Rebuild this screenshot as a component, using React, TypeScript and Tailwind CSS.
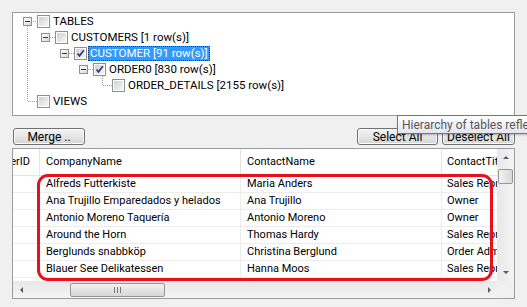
import type { ReactNode } from 'react';

const font = { fontFamily: 'Roboto, "Noto Sans", sans-serif' };

const rows = [
	['Alfreds Futterkiste', 'Maria Anders', 'Sales Representative'],
	['Ana Trujillo Emparedados y helados', 'Ana Trujillo', 'Owner'],
	['Antonio Moreno Taquería', 'Antonio Moreno', 'Owner'],
	['Around the Horn', 'Thomas Hardy', 'Sales Representative'],
	['Berglunds snabbköp', 'Christina Berglund', 'Order Administrator'],
	['Blauer See Delikatessen', 'Hanna Moos', 'Sales Representative'],
];

function ExpandBox() {
	return (
		<span className="relative w-[9px] h-[9px] border border-[#919191] bg-linear-to-br from-white to-[#d8d8d8] flex items-center justify-center shrink-0">
			<span className="w-[5px] h-px bg-[#1e395b]" />
		</span>
	);
}

function CheckBox({ checked }: { checked?: boolean }) {
	return (
		<span className="w-[13px] h-[13px] border border-[#8e8f8f] p-px bg-white shrink-0">
			<span className="block w-full h-full bg-linear-to-br from-[#cfd1d4] to-[#f7f7f7]">
				{checked && (
					<svg width="9" height="9" viewBox="0 0 9 9">
						<path d="M1.5 4.5 L3.5 6.8 L7.8 1.3" stroke="#2a3f73" strokeWidth="1.7" fill="none" />
					</svg>
				)}
			</span>
		</span>
	);
}

function TreeRow({
	pad,
	expand,
	checked,
	selected,
	children,
}: {
	pad: string;
	expand?: boolean;
	checked?: boolean;
	selected?: boolean;
	children: ReactNode;
}) {
	return (
		<div className={`h-[16px] flex items-center ${pad}`}>
			{expand ? <ExpandBox /> : <span className="w-[9px] shrink-0" />}
			<span className="w-[5px] shrink-0" />
			<CheckBox checked={checked} />
			<span
				className={
					selected
						? 'ml-px px-px h-[15px] leading-[13px] bg-[#3399ff] text-white border border-dotted border-[#1d3b66] whitespace-nowrap'
						: 'ml-px px-[2px] leading-[15px] whitespace-nowrap'
				}
			>
				{children}
			</span>
		</div>
	);
}

function Button({ w, children }: { w: string; children: ReactNode }) {
	return (
		<div
			className={`${w} h-[17px] border border-[#707070] rounded-[3px] bg-linear-to-b from-[#f3f3f3] via-[#e6e6e6] to-[#d4d4d4] flex items-center justify-center text-[12px] leading-none text-black shadow-[inset_0_0_0_1px_#fcfcfc]`}
		>
			{children}
		</div>
	);
}

function Arrow({ dir }: { dir: 'up' | 'down' | 'left' | 'right' }) {
	const d = {
		up: 'M1 5 L4 2 L7 5 Z',
		down: 'M1 2 L4 5 L7 2 Z',
		left: 'M5 1 L2 4 L5 7 Z',
		right: 'M3 1 L6 4 L3 7 Z',
	}[dir];
	return (
		<svg width="8" height="8" viewBox="0 0 8 8">
			<path d={d} fill="#5a5a5a" />
		</svg>
	);
}

export default function App() {
	return (
		<div
			className="relative w-[527px] h-[307px] bg-[#f0f0f0] overflow-hidden text-[12px] text-black pt-[12px]"
			style={font}
		>
			{/* tree */}
			<div className="relative mx-[12px] h-[104px] border border-[#9c9c9c] bg-white text-[11.5px]">
				<svg className="absolute inset-0" width="503" height="102">
					<g stroke="#a0a0a0" strokeDasharray="1 1" fill="none">
						<path d="M14.5 13 V88.5 H24" />
						<path d="M18 8.5 H24" />
						<path d="M37 24.5 H42" />
						<path d="M56 40.5 H61" />
						<path d="M75 56.5 H80" />
						<path d="M89.5 61 V72.5 H99" />
					</g>
				</svg>
				<div className="relative">
					<TreeRow pad="pl-[10px]" expand>
						TABLES
					</TreeRow>
					<TreeRow pad="pl-[28px]" expand>
						CUSTOMERS [1 row(s)]
					</TreeRow>
					<TreeRow pad="pl-[47px]" expand checked selected>
						CUSTOMER [91 row(s)]
					</TreeRow>
					<TreeRow pad="pl-[66px]" expand checked>
						ORDER0 [830 row(s)]
					</TreeRow>
					<TreeRow pad="pl-[85px]">ORDER_DETAILS [2155 row(s)]</TreeRow>
					<TreeRow pad="pl-[10px]">VIEWS</TreeRow>
				</div>
			</div>

			{/* buttons */}
			<div className="mt-[12px] px-[12px] flex items-center">
				<div className="ml-px">
					<Button w="w-[72px]">Merge ..</Button>
				</div>
				<div className="flex-1" />
				<Button w="w-[81px]">Select All</Button>
				<div className="w-[4px]" />
				<Button w="w-[73px]">Deselect All</Button>
			</div>

			{/* grid */}
			<div className="mx-[12px] mt-[3px] h-[151px] border border-[#9c9c9c] bg-white flex flex-col text-[11px]">
				<div className="h-[132px] flex">
					<div className="flex-1 flex flex-col overflow-hidden">
						<div className="h-[27px] flex border-b border-[#e3e3e3] shrink-0">
							<div className="w-[27px] flex justify-end items-center pr-[9px] overflow-hidden whitespace-nowrap border-r border-[#e3e3e3]">
								CustomerID
							</div>
							<div className="w-[201px] pl-[6px] flex items-center border-r border-[#e3e3e3]">
								CompanyName
							</div>
							<div className="w-[201px] pl-[6px] flex items-center border-r border-[#e3e3e3]">
								ContactName
							</div>
							<div className="flex-1 pl-[5px] flex items-center overflow-hidden whitespace-nowrap">
								ContactTitle
							</div>
						</div>
						{rows.map((r) => (
							<div key={r[0]} className="h-[17px] flex border-b border-[#ececec] shrink-0">
								<div className="w-[27px] border-r border-[#ececec]" />
								<div className="w-[201px] pl-[6px] flex items-center whitespace-nowrap border-r border-[#ececec]">
									{r[0]}
								</div>
								<div className="w-[201px] pl-[6px] flex items-center whitespace-nowrap border-r border-[#ececec]">
									{r[1]}
								</div>
								<div className="flex-1 pl-[5px] flex items-center overflow-hidden whitespace-nowrap">
									{r[2]}
								</div>
							</div>
						))}
					</div>
					{/* vertical scrollbar */}
					<div className="w-[17px] bg-linear-to-r from-[#e8e8e8] to-[#f4f4f4] flex flex-col items-center">
						<div className="h-[17px] flex items-center justify-center">
							<Arrow dir="up" />
						</div>
						<div className="w-[15px] h-[15px] mt-[3px] rounded-[2px] border border-[#989898] bg-linear-to-r from-[#f2f2f2] to-[#d9d9d9]" />
						<div className="flex-1" />
						<div className="h-[17px] flex items-center justify-center">
							<Arrow dir="down" />
						</div>
					</div>
				</div>
				{/* horizontal scrollbar */}
				<div className="h-[17px] flex">
					<div className="flex-1 bg-linear-to-b from-[#e8e8e8] to-[#f4f4f4] flex items-center">
						<div className="w-[17px] flex items-center justify-center">
							<Arrow dir="left" />
						</div>
						<div className="ml-[40px] w-[95px] h-[14px] rounded-[2px] border border-[#989898] bg-linear-to-b from-[#f2f2f2] to-[#d6d6d6] flex items-center justify-center gap-[2px]">
							<span className="w-px h-[6px] bg-[#777]" />
							<span className="w-px h-[6px] bg-[#777]" />
							<span className="w-px h-[6px] bg-[#777]" />
						</div>
						<div className="flex-1" />
						<div className="w-[17px] flex items-center justify-center">
							<Arrow dir="right" />
						</div>
					</div>
					<div className="w-[17px] bg-[#f0f0f0]" />
				</div>
			</div>

			{/* red highlight annotation */}
			<div className="absolute left-[37px] top-[174px] w-[456px] h-[107px] border-[3px] border-[#e8101a] rounded-[11px] pointer-events-none" />

			{/* tooltip */}
			<div className="absolute left-[397px] top-[115px] w-[160px] h-[19px] border border-[#767676] bg-linear-to-b from-white to-[#e4e5f0] pl-[4px] flex items-center whitespace-nowrap text-[12px] text-[#575757] shadow-[1px_1px_2px_rgba(0,0,0,0.25)]">
				Hierarchy of tables reflects the relations
			</div>
		</div>
	);
}
